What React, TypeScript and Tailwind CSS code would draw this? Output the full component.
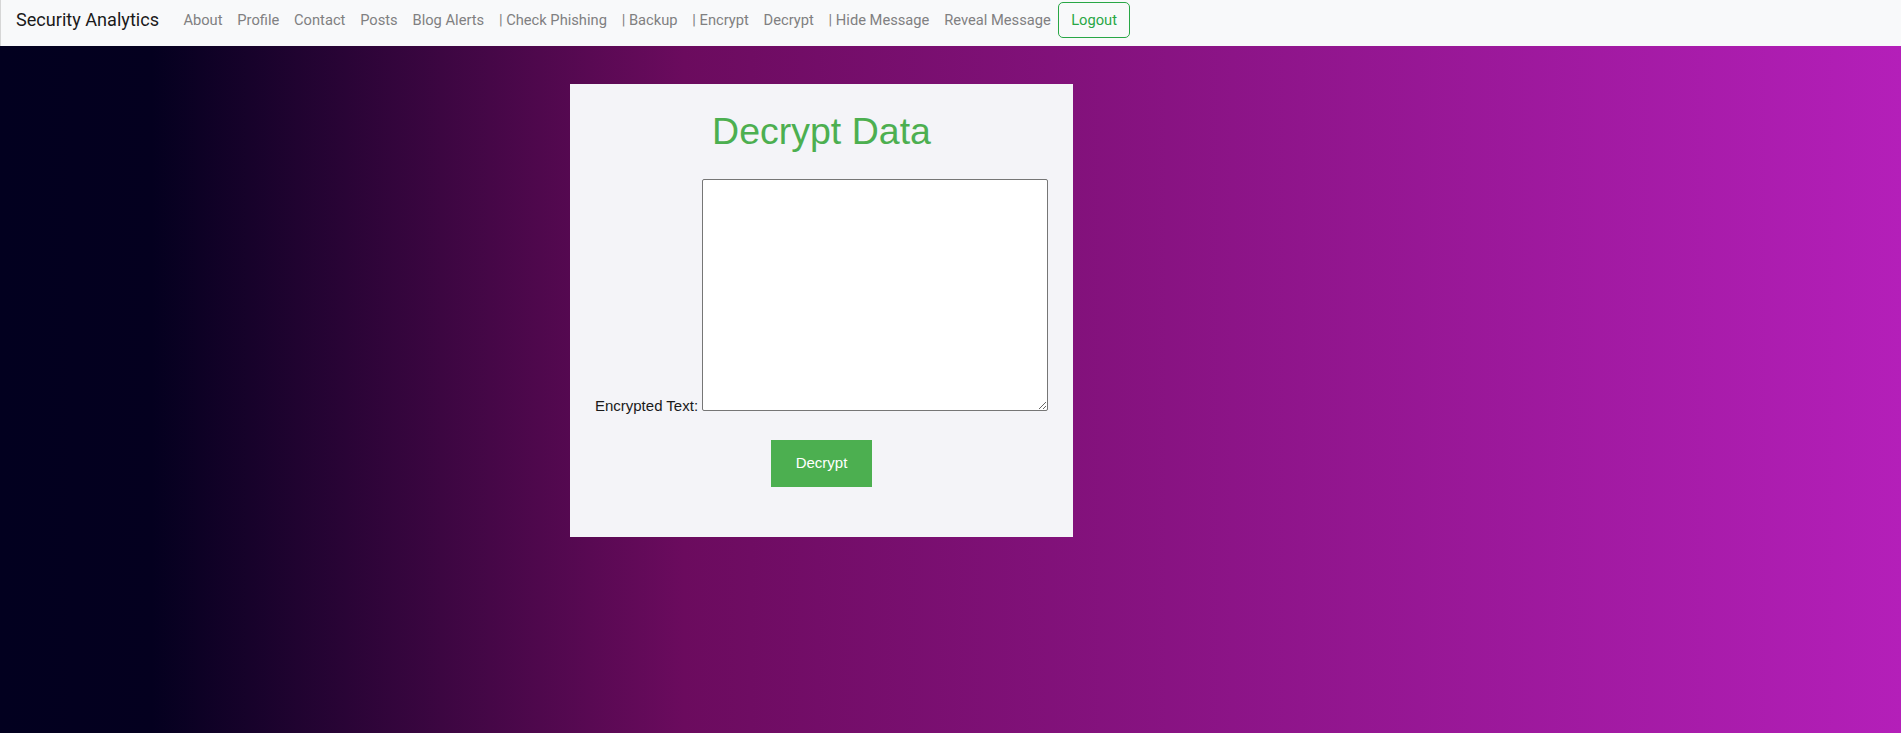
import { useState } from 'react';

const NAV_LINKS = [
  'About',
  'Profile',
  'Contact',
  'Posts',
  'Blog Alerts',
  '| Check Phishing',
  '| Backup',
  '| Encrypt',
  'Decrypt',
  '| Hide Message',
  'Reveal Message',
];

function Navbar() {
  return (
    <nav className="flex h-[46px] items-start border-l border-[#d6d6d6] bg-[#f8f9fa] pl-[15px] pt-[2px] font-['Roboto','Liberation_Sans',sans-serif]">
      <a className="mr-[17px] flex h-[36px] items-center text-[18.1px] text-[#1a1a1a]">Security Analytics</a>
      <ul className="flex items-start">
        {NAV_LINKS.map((label) => (
          <li key={label}>
            <a className="flex h-[36px] items-center whitespace-pre px-[7.4px] text-[14.7px] text-[#808081]">{label}</a>
          </li>
        ))}
      </ul>
      <button className="flex h-[36px] items-center rounded-[5px] border border-[#28a745] px-[12px] text-[14.7px] text-[#28a745]">
        Logout
      </button>
    </nav>
  );
}

export default function App() {
  const [text, setText] = useState('');

  return (
    <div className="min-h-screen">
      <Navbar />
      <main className="h-[687px] bg-[linear-gradient(to_right,#02001f_0%,#04001f_8%,#6b0b5e_36%,#b41fb9_100%)] pl-[570px] pt-[38px]">
        <div className="flex h-[453px] w-[503px] flex-col items-center bg-[#f4f4f8] font-['Liberation_Sans',Arial,sans-serif]">
          <h1 className="mt-[29px] h-[37px] text-[37.5px] leading-[37px] text-[#4caf50]">Decrypt Data</h1>
          <div className="mt-[29px] flex items-end gap-[4px]">
            <label htmlFor="enc" className="mb-[-2px] text-[15px] leading-none text-[#1a1a1a]">
              Encrypted Text:
            </label>
            <textarea
              id="enc"
              value={text}
              onChange={(e) => setText(e.target.value)}
              className="block h-[232px] w-[346px] rounded-[2px] border border-[#767676] bg-white p-[2px] text-[13px] outline-none"
            />
          </div>
          <button className="mt-[29px] h-[47px] w-[101px] bg-[#4caf50] text-[15px] text-white">Decrypt</button>
        </div>
      </main>
    </div>
  );
}
